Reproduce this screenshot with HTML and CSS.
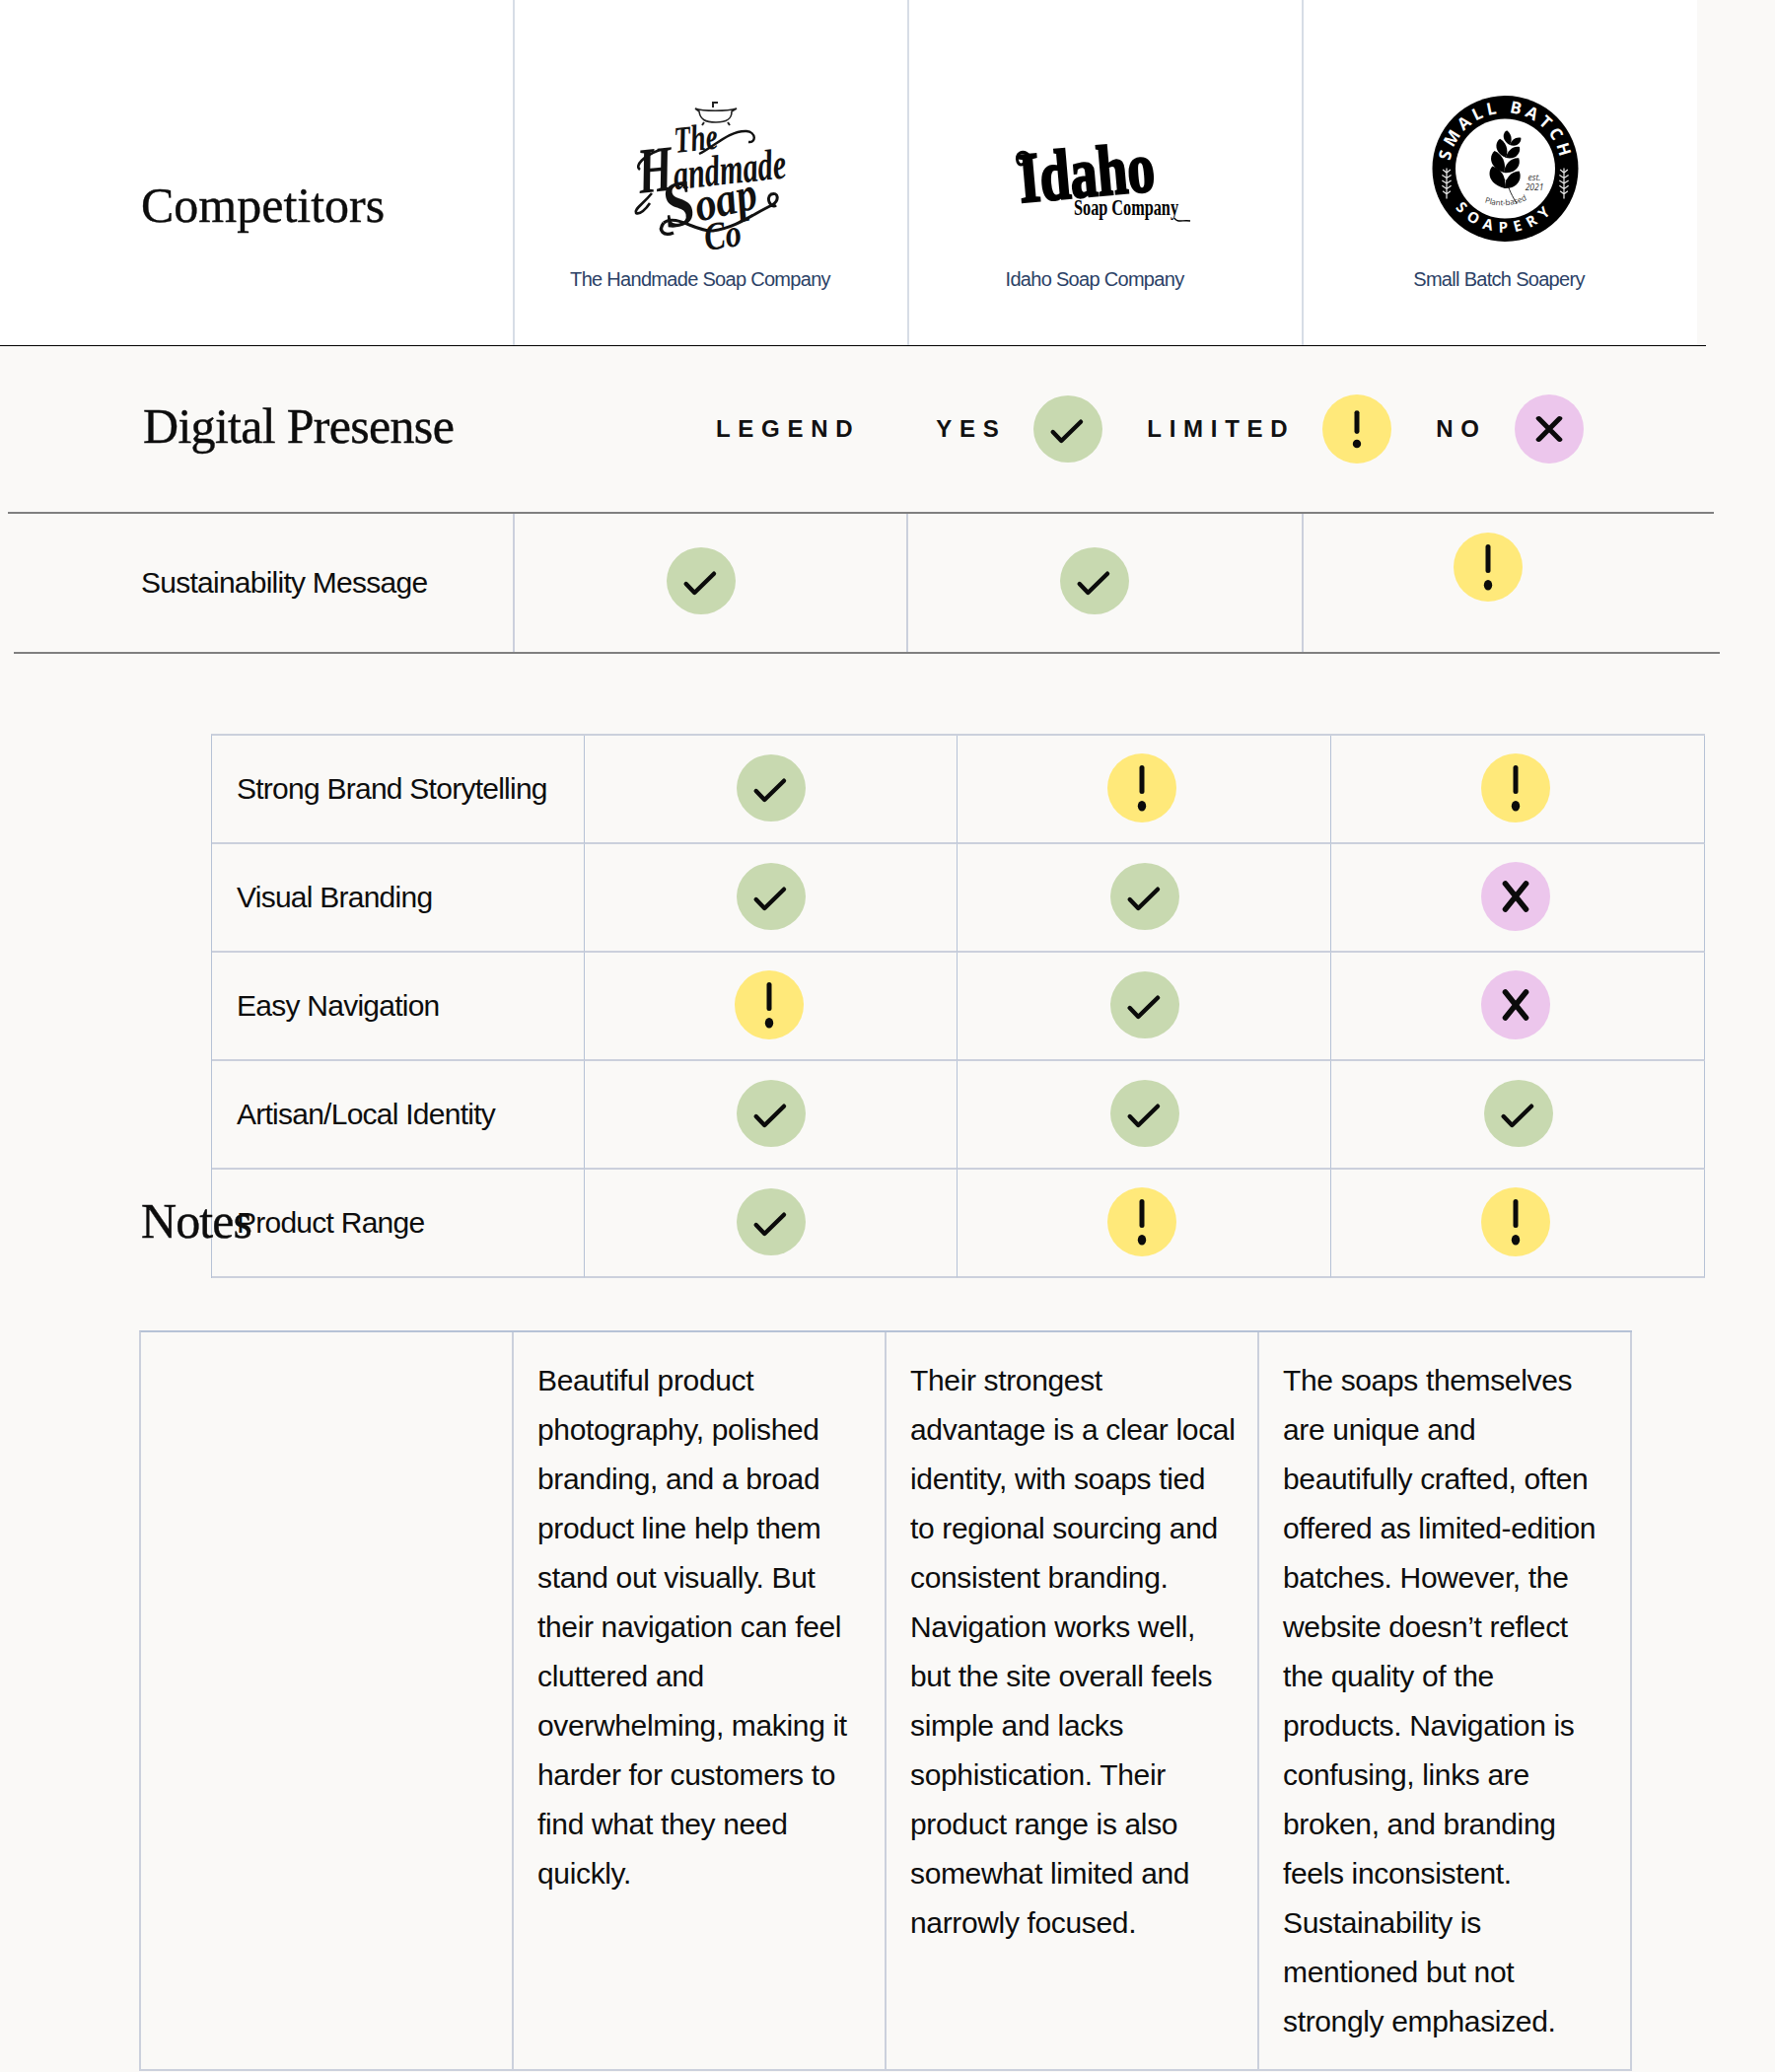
FILE: index.html
```html
<!doctype html>
<html>
    <head>
        <meta charset="UTF-8">
        <meta name="viewport" content="width=device-width, initial-scale=1">
        <title>Competitors</title>
        <link rel="stylesheet" href="styles.css">
    </head>
    <body>
        <svg class="sprites" width="0" height="0">
            <symbol id="i-yes" viewBox="0 0 70 70">
                <polyline points="19.7,37 28.3,46 48,26.7" fill="none" stroke="#0b0b0b" stroke-width="4.4" stroke-linecap="round" stroke-linejoin="round"/>
            </symbol>
            <symbol id="i-limited" viewBox="0 0 70 70">
                <line x1="35" y1="14.5" x2="35" y2="38.5" stroke="#0b0b0b" stroke-width="5" stroke-linecap="round"/>
                <ellipse cx="35" cy="53.3" rx="4.2" ry="5.2" fill="#0b0b0b"/>
            </symbol>
            <symbol id="i-no" viewBox="0 0 70 70">
                <path d="M24.5 22 L45.5 48 M45.5 22 L24.5 48" fill="none" stroke="#0b0b0b" stroke-width="5.6" stroke-linecap="round"/>
            </symbol>
            <symbol id="sprig" viewBox="0 0 16 44">
                <path d="M8 2 V42 M8 8 L3 4 M8 8 L13 4 M8 15 L2 11 M8 15 L14 11 M8 22 L2 18 M8 22 L14 18 M8 29 L2 25 M8 29 L14 25 M8 36 L3 32 M8 36 L13 32" fill="none" stroke="#e8e8e8" stroke-width="1.6"/>
            </symbol>
        </svg>

        <section class="hero">
            <div class="hero-inner">
                <h2 class="title hero-title">Competitors</h2>

                <div class="brand brand-offset">
                    <svg class="logo" viewBox="601 90 240 170">
                        <!-- bath tub -->
                        <path d="M704 110 C712 113 736 113 746 110 L741 113 C741 121 736 124 725 124 C714 124 709 121 708 113 Z" fill="#fff" stroke="#222" stroke-width="1.6"/>
                        <path d="M713 124 l-2 3 M737 124 l2 3 M722 109 v-5 h5" fill="none" stroke="#222" stroke-width="2"/>
                        <!-- swashes -->
                        <path d="M708 156 C722 150 738 132 756 133 C766 134 766 145 758 144" fill="none" stroke="#111" stroke-width="2.4"/>
                        <path d="M672 226 C684 216 706 236 722 234 C746 231 764 216 782 208 C790 203 788 194 781 197 C775 201 781 212 786 208" fill="none" stroke="#111" stroke-width="3"/>
                        <path d="M672 226 C666 234 672 240 682 236" fill="none" stroke="#111" stroke-width="3.4"/>
                        <path d="M668 152 C652 158 642 168 648 172 M660 196 C650 208 642 212 644 216 C648 218 654 212 658 206" fill="none" stroke="#111" stroke-width="2.6"/>
                        <text class="script" transform="translate(684 155) rotate(-6) scale(.72 1)" font-size="38">The</text>
                        <text class="script" transform="translate(648 196) rotate(-6) scale(.69 1)"><tspan font-size="66">H</tspan><tspan font-size="44">andmade</tspan></text>
                        <text class="script" transform="translate(676 232) rotate(-13) scale(.88 1)"><tspan font-size="66">S</tspan><tspan font-size="48">oap</tspan></text>
                        <text class="script" transform="translate(715 254) rotate(-8) scale(.8 1)" font-size="40">Co</text>
                    </svg>
                    <p class="brand-name">The Handmade Soap Company</p>
                </div>

                <div class="brand brand-offset">
                    <svg class="logo" viewBox="1001 90 240 170">
                        <path d="M1044 159 C1036 150 1028 156 1031 164 C1033 169 1038 167 1038 163" fill="none" stroke="#000" stroke-width="3"/>
                        <text class="idaho" transform="translate(1034 205) rotate(-5)" font-size="72" textLength="138" lengthAdjust="spacingAndGlyphs">Idaho</text>
                        <text class="idaho-sub" transform="translate(1088 218)" font-size="23" textLength="106" lengthAdjust="spacingAndGlyphs">Soap Company</text>
                        <path d="M1190 221 C1192 226 1198 223 1206 224" fill="none" stroke="#000" stroke-width="1.4"/>
                    </svg>
                    <p class="brand-name">Idaho Soap Company</p>
                </div>

                <div class="brand brand-last">
                    <svg class="logo" viewBox="1402 90 240 170">
                        <defs>
                            <path id="arc-top" d="M1470 171 A56.5 56.5 0 0 1 1583 171"/>
                            <path id="arc-bottom" d="M1462 171 A64.5 64.5 0 0 0 1591 171"/>
                            <path id="arc-plant" d="M1502 204 Q1527 214 1552 201"/>
                            <g id="leaf-pair">
                                <path d="M0 0 C-16 -2 -19 -14 -14 -20 C-5 -18 1 -10 0 0 Z"/>
                                <path d="M0 0 C13 -1 16 -12 12 -18 C4 -17 -1 -9 0 0 Z"/>
                            </g>
                        </defs>
                        <circle cx="1526.5" cy="171" r="74"/>
                        <circle cx="1526.5" cy="171" r="50.5" fill="#fff"/>
                        <text class="ring-text" font-size="17"><textPath href="#arc-top" startOffset="50%" text-anchor="middle">SMALL BATCH</textPath></text>
                        <text class="ring-text ring-low" font-size="15"><textPath href="#arc-bottom" startOffset="50%" text-anchor="middle">SOAPERY</textPath></text>
                        <use href="#sprig" x="1459" y="169" width="16" height="34"/>
                        <use href="#sprig" x="1578" y="169" width="16" height="34"/>
                        <path d="M1527 182 C1530 192 1534 200 1538 206" fill="none" stroke="#222" stroke-width="1"/>
                        <use href="#leaf-pair" transform="translate(1526 191) rotate(6) scale(1.05)"/>
                        <use href="#leaf-pair" transform="translate(1525 175) rotate(12) scale(.98)"/>
                        <use href="#leaf-pair" transform="translate(1527 160) rotate(18) scale(.82)"/>
                        <use href="#leaf-pair" transform="translate(1531 147) rotate(24) scale(.62)"/>
                        <text class="est" x="1556" y="183" font-size="8.5" text-anchor="middle">est.</text>
                        <text class="est" x="1556" y="193" font-size="8.5" text-anchor="middle">2021</text>
                        <text class="plant" font-size="8"><textPath href="#arc-plant" startOffset="50%" text-anchor="middle">Plant-based</textPath></text>
                    </svg>
                    <p class="brand-name">Small Batch Soapery</p>
                </div>
            </div>
        </section>

        <section class="legend-row">
            <h2 class="title legend-title">Digital Presense</h2>
            <div class="legend">
                <span class="legend-label legend-head">LEGEND</span>
                <div class="legend-item">
                    <span class="legend-label">YES</span>
                    <span class="mark yes"><svg><use href="#i-yes"/></svg></span>
                </div>
                <div class="legend-item">
                    <span class="legend-label">LIMITED</span>
                    <span class="mark limited"><svg><use href="#i-limited"/></svg></span>
                </div>
                <div class="legend-item legend-item-tight">
                    <span class="legend-label">NO</span>
                    <span class="mark no"><svg><use href="#i-no"/></svg></span>
                </div>
            </div>
        </section>

        <section class="message-row">
            <div class="message-label">Sustainability Message</div>
            <div class="message-cell"><span class="mark yes"><svg><use href="#i-yes"/></svg></span></div>
            <div class="message-cell"><span class="mark yes"><svg><use href="#i-yes"/></svg></span></div>
            <div class="message-cell message-high"><span class="mark limited"><svg><use href="#i-limited"/></svg></span></div>
        </section>

        <section class="scores">
            <div class="score-label">Strong Brand Storytelling</div>
            <div class="score"><span class="mark yes"><svg><use href="#i-yes"/></svg></span></div>
            <div class="score"><span class="mark limited"><svg><use href="#i-limited"/></svg></span></div>
            <div class="score"><span class="mark limited"><svg><use href="#i-limited"/></svg></span></div>

            <div class="score-label">Visual Branding</div>
            <div class="score"><span class="mark yes"><svg><use href="#i-yes"/></svg></span></div>
            <div class="score"><span class="mark yes"><svg><use href="#i-yes"/></svg></span></div>
            <div class="score"><span class="mark no"><svg><use href="#i-no"/></svg></span></div>

            <div class="score-label">Easy Navigation</div>
            <div class="score"><span class="mark limited"><svg><use href="#i-limited"/></svg></span></div>
            <div class="score"><span class="mark yes"><svg><use href="#i-yes"/></svg></span></div>
            <div class="score"><span class="mark no"><svg><use href="#i-no"/></svg></span></div>

            <div class="score-label">Artisan/Local Identity</div>
            <div class="score"><span class="mark yes"><svg><use href="#i-yes"/></svg></span></div>
            <div class="score"><span class="mark yes"><svg><use href="#i-yes"/></svg></span></div>
            <div class="score"><span class="mark yes"><svg><use href="#i-yes"/></svg></span></div>

            <div class="score-label">Product Range</div>
            <div class="score"><span class="mark yes"><svg><use href="#i-yes"/></svg></span></div>
            <div class="score"><span class="mark limited"><svg><use href="#i-limited"/></svg></span></div>
            <div class="score"><span class="mark limited"><svg><use href="#i-limited"/></svg></span></div>
        </section>

        <h2 class="title notes-title">Notes</h2>

        <section class="notes">
            <div class="note"></div>
            <div class="note">
                Beautiful product<br>
                photography, polished<br>
                branding, and a broad<br>
                product line help them<br>
                stand out visually. But<br>
                their navigation can feel<br>
                cluttered and<br>
                overwhelming, making it<br>
                harder for customers to<br>
                find what they need<br>
                quickly.
            </div>
            <div class="note">
                Their strongest<br>
                advantage is a clear local<br>
                identity, with soaps tied<br>
                to regional sourcing and<br>
                consistent branding.<br>
                Navigation works well,<br>
                but the site overall feels<br>
                simple and lacks<br>
                sophistication. Their<br>
                product range is also<br>
                somewhat limited and<br>
                narrowly focused.
            </div>
            <div class="note">
                The soaps themselves<br>
                are unique and<br>
                beautifully crafted, often<br>
                offered as limited-edition<br>
                batches. However, the<br>
                website doesn’t reflect<br>
                the quality of the<br>
                products. Navigation is<br>
                confusing, links are<br>
                broken, and branding<br>
                feels inconsistent.<br>
                Sustainability is<br>
                mentioned but not<br>
                strongly emphasized.
            </div>
        </section>
    </body>
</html>
```

FILE: styles.css
```css
:root {
    --paper: #faf9f7;
    --ink: #0d0d0d;
    --navy: #2b4166;
    --rule: #808080;
    --grid: #cbd0dc;
    --grid-dark: #b6c2d6;
}

html, body {
    margin: 0;
    background-color: var(--paper);
}

body {
    width: 1800px;
    height: 2101px;
    overflow: hidden;
    font-family: "Liberation Sans", Arial, sans-serif;
    color: var(--ink);
}

.sprites {
    position: absolute;
}

.title {
    margin: 0;
    font-family: "Liberation Serif", serif;
    font-weight: 400;
    font-size: 50px;
    line-height: 56px;
    -webkit-text-stroke: 0.4px var(--ink);
}

/* top row with the logos */
.hero {
    width: 1730px;
    height: 351px;
    box-sizing: border-box;
    border-bottom: 1px solid #000;
}

.hero-inner {
    display: grid;
    grid-template-columns: 521px 400px 400px 400px;
    width: 1721px;
    height: 350px;
    background-color: #fff;
}

.hero-title {
    padding: 180px 0 0 143px;
}

.brand {
    display: flex;
    flex-direction: column;
    align-items: center;
    padding-top: 90px;
    border-left: 2px solid #d7dde6;
    margin-left: -1px;
}

.logo {
    width: 240px;
    height: 170px;
    display: block;
    overflow: visible;
}

.brand-name {
    margin: 10px 0 0 0;
    font-size: 20px;
    line-height: 26px;
    letter-spacing: -0.7px;
    color: var(--navy);
}

.brand-offset .brand-name {
    margin-right: 23px;
}

.brand-last .brand-name {
    margin-right: 3px;
}

.script {
    font-family: "Liberation Serif", serif;
    font-style: italic;
    font-weight: 700;
    fill: #111;
}

.idaho {
    font-family: "Liberation Serif", serif;
    font-weight: 700;
    fill: #000;
    stroke: #000;
    stroke-width: 2.5;
}

.idaho-sub {
    font-family: "Liberation Serif", serif;
    font-weight: 700;
    fill: #000;
}

.ring-text {
    font-family: "Open Sans", "Liberation Sans", sans-serif;
    font-weight: 700;
    letter-spacing: 4px;
    fill: #fff;
}

.ring-low {
    letter-spacing: 7px;
}

.est {
    font-family: "Open Sans", sans-serif;
    font-style: italic;
    fill: #333;
}

.plant {
    font-family: "Open Sans", sans-serif;
    fill: #333;
}

/* the round marks */
.mark {
    display: block;
    width: 70px;
    height: 70px;
    border-radius: 50%;
    flex: none;
}

.mark svg {
    display: block;
    width: 70px;
    height: 70px;
    overflow: visible;
}

.yes {
    height: 68px;
    background-color: #c8d9b0;
}

.limited {
    background-color: #ffe97a;
}

.no {
    background-color: #ecc6ec;
}

/* legend */
.legend-row {
    display: flex;
    align-items: center;
    box-sizing: border-box;
    width: 1730px;
    height: 170px;
    margin-left: 8px;
    border-bottom: 2px solid var(--rule);
}

.legend-title {
    width: 581px;
    padding-left: 137px;
    margin-top: -6px;
    letter-spacing: -0.7px;
}

.legend {
    display: flex;
    align-items: center;
}

.legend-item {
    display: flex;
    align-items: center;
    gap: 28px;
    margin-left: 45px;
}

.legend-item-tight {
    gap: 28px;
}

/* the marks are drawn a bit flatter in the legend */
.legend .limited svg,
.legend .no svg {
    transform: scaleY(.82);
}

.legend-label {
    font-size: 24px;
    font-weight: 700;
    letter-spacing: 7.7px;
    color: #111;
}

.legend-head {
    margin-right: 32px;
}

/* sustainability row */
.message-row {
    display: grid;
    grid-template-columns: 506px 399px 401px 424px;
    box-sizing: border-box;
    width: 1730px;
    height: 142px;
    margin-left: 14px;
    border-bottom: 2px solid var(--rule);
}

.message-label {
    padding: 52px 0 0 129px;
    font-size: 30px;
    line-height: 36px;
    letter-spacing: -0.75px;
}

.message-cell {
    height: 140px;
    box-sizing: border-box;
    padding: 34px 0 0 154px;
    border-left: 2px solid var(--grid);
}

.message-high {
    padding: 19px 0 0 152px;
}

/* scores table */
.scores {
    display: grid;
    grid-template-columns: 378px 378px 379px 379px;
    grid-auto-rows: 110px;
    box-sizing: border-box;
    width: 1515px;
    margin: 81px 0 0 214px;
    border-top: 2px solid var(--grid);
    border-left: 1px solid var(--grid-dark);
}

.score-label,
.score {
    box-sizing: border-box;
    display: flex;
    align-items: center;
    border-right: 1px solid var(--grid-dark);
    border-bottom: 2px solid var(--grid);
}

.score-label {
    padding-left: 25px;
    font-size: 30px;
    letter-spacing: -0.75px;
}

.score {
    justify-content: center;
    padding-bottom: 2px;
}

.score .yes {
    margin-left: 1px;
}

.score .limited,
.score .no {
    margin-right: 4px;
}

/* sits across the last row of the table above */
.notes-title {
    position: relative;
    margin: -86px 0 83px 143px;
    letter-spacing: -0.9px;
}

.notes {
    display: grid;
    grid-template-columns: repeat(4, 378px);
    box-sizing: border-box;
    width: 1514px;
    height: 751px;
    margin-left: 141px;
    border-top: 2px solid var(--grid-dark);
    border-left: 2px solid var(--grid);
    border-bottom: 2px solid var(--grid);
}

.note {
    box-sizing: border-box;
    padding: 24px 0 0 24px;
    border-right: 2px solid var(--grid);
    font-size: 30px;
    line-height: 50px;
    letter-spacing: -0.35px;
    white-space: nowrap;
}
```
